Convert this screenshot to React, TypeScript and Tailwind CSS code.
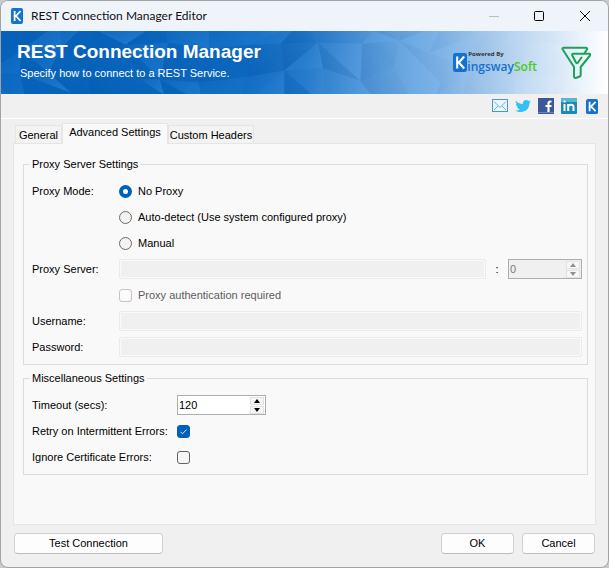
import { useState, type ReactNode } from "react";

const COLS = 17;
const ROWS = 3;
const CELL_W = 38;
const CELL_H = 26;

function jitter(n: number) {
  const v = Math.sin(n * 127.1 + 11.7) * 43758.5453;
  return v - Math.floor(v);
}

function vertex(c: number, r: number) {
  const n = r * 31 + c;
  return [(c - 0.5) * CELL_W + jitter(n) * 26 - 13, (r - 0.3) * CELL_H + jitter(n + 99) * 18 - 9];
}

function Facets() {
  const shapes: ReactNode[] = [];
  for (let r = 0; r < ROWS; r++) {
    for (let c = 0; c < COLS; c++) {
      const a = vertex(c, r);
      const b = vertex(c + 1, r);
      const d = vertex(c, r + 1);
      const e = vertex(c + 1, r + 1);
      const flip = jitter(r * 53 + c * 7) > 0.5;
      const tris = flip ? [[a, b, d], [b, e, d]] : [[a, b, e], [a, e, d]];
      tris.forEach((t, i) => {
        const s = jitter(r * 211 + c * 17 + i * 5);
        shapes.push(
          <polygon
            key={`${r}-${c}-${i}`}
            points={t.map((p) => p.join(",")).join(" ")}
            fill={s > 0.5 ? "url(#facetLight)" : "url(#facetDark)"}
            opacity={0.3 + Math.abs(s - 0.5) * 0.8}
          />,
        );
      });
    }
  }
  return (
    <svg className="absolute inset-0 h-full w-full" viewBox="0 0 607 63" preserveAspectRatio="none" aria-hidden="true">
      <defs>
        <linearGradient id="facetBase">
          <stop offset="0" stopColor="#0563bc" />
          <stop offset="0.4" stopColor="#0c69c0" />
          <stop offset="0.55" stopColor="#2a7dcc" />
          <stop offset="0.68" stopColor="#5098dc" />
          <stop offset="0.78" stopColor="#84b5e5" />
          <stop offset="0.9" stopColor="#c2daf2" />
          <stop offset="1" stopColor="#ffffff" />
        </linearGradient>
        <linearGradient id="facetLight" x1="0" y1="0" x2="1" y2="1">
          <stop offset="0" stopColor="#4f9ce6" stopOpacity="0.05" />
          <stop offset="1" stopColor="#4f9ce6" stopOpacity="0.6" />
        </linearGradient>
        <linearGradient id="facetDark" x1="1" y1="0" x2="0" y2="1">
          <stop offset="0" stopColor="#004c9c" stopOpacity="0.05" />
          <stop offset="1" stopColor="#004c9c" stopOpacity="0.45" />
        </linearGradient>
        <linearGradient id="facetFade">
          <stop offset="0.5" stopColor="#8fbdea" stopOpacity="0" />
          <stop offset="0.72" stopColor="#8fbdea" stopOpacity="0.6" />
          <stop offset="0.85" stopColor="#c3dbf3" stopOpacity="0.8" />
          <stop offset="1" stopColor="#fff" />
        </linearGradient>
      </defs>
      <rect width="607" height="63" fill="url(#facetBase)" />
      {shapes}
      <rect width="607" height="63" fill="url(#facetFade)" />
    </svg>
  );
}

function KIcon({ className }: { className: string }) {
  return (
    <svg className={className} viewBox="0 0 12 16" preserveAspectRatio="none" aria-hidden="true">
      <rect width="12" height="16" rx="2" fill="#1571cf" />
      <path d="M3.6 3v10M9.6 3 5 8l4.6 5" fill="none" stroke="#fff" strokeWidth="1.8" />
    </svg>
  );
}

function Spinner({ id, value, disabled, label }: { id: string; value: string; disabled?: boolean; label?: string }) {
  const [current, setCurrent] = useState(value);
  const step = (d: number) => setCurrent(String(Math.max(0, Number(current) + d)));
  const arrow = disabled ? "fill-[#8f8f8f]" : "fill-black";
  const button = "flex h-2 w-[14px] items-center justify-center border border-[#e2e2e2] bg-[#f7f7f7]";
  return (
    <div className={`flex h-5 items-center border border-[#abadb3] pr-px ${disabled ? "w-[74px] bg-[#f0f0f0]" : "w-[89px] bg-white"}`}>
      <input
        id={id}
        aria-label={label}
        disabled={disabled}
        value={current}
        onChange={(e) => setCurrent(e.target.value)}
        className="h-4 min-w-0 flex-1 bg-transparent pl-px text-[11px] leading-4 text-black outline-none disabled:text-[#7b7b7b]"
      />
      <div className="flex flex-col gap-px">
        <button type="button" aria-label="Increase" disabled={disabled} onClick={() => step(1)} className={button}>
          <svg width="6" height="4" viewBox="0 0 6 4" className={arrow}><path d="M3 0 6 4H0z" /></svg>
        </button>
        <button type="button" aria-label="Decrease" disabled={disabled} onClick={() => step(-1)} className={button}>
          <svg width="6" height="4" viewBox="0 0 6 4" className={arrow}><path d="M0 0h6L3 4z" /></svg>
        </button>
      </div>
    </div>
  );
}

function CheckBox({ id, defaultChecked, disabled }: { id: string; defaultChecked?: boolean; disabled?: boolean }) {
  return (
    <span className="grid size-[13px] shrink-0">
      <input
        id={id}
        type="checkbox"
        defaultChecked={defaultChecked}
        disabled={disabled}
        className="peer col-start-1 row-start-1 size-[13px] appearance-none rounded-[3px] border border-[#626262] bg-[#f5f5f5] checked:border-[#005fb8] checked:bg-[#005fb8] disabled:border-[#c4c4c4] disabled:bg-[#fbfbfb]"
      />
      <svg viewBox="0 0 13 13" className="pointer-events-none col-start-1 row-start-1 hidden size-[13px] peer-checked:block" aria-hidden="true">
        <path d="m3.5 6.8 2 2 4-4.2" fill="none" stroke="#d8e8f6" strokeWidth="1" />
      </svg>
    </span>
  );
}

function RadioRow({ id, label, defaultChecked }: { id: string; label: string; defaultChecked?: boolean }) {
  return (
    <div className="flex h-[26px] items-center gap-[6px]">
      <input
        id={id}
        type="radio"
        name="proxyMode"
        defaultChecked={defaultChecked}
        className="size-[13px] appearance-none rounded-full border border-[#6a6a6a] bg-[#f3f3f3] checked:border-4 checked:border-[#005fb8] checked:bg-white"
      />
      <label htmlFor={id}>{label}</label>
    </div>
  );
}

const row = "flex h-[26px] items-center";
const field = "h-5 min-w-0 flex-1 rounded-[2px] border border-[#ebebeb] bg-[#f0f0f0] px-1 shadow-[inset_0_0_0_1px_#fafafa] outline-none";
const group = "border border-[#dcdcdc] pt-1 pb-1 pl-2";
const legend = "-ml-[2px] px-[2px] leading-5";
const pushButton = "h-[21px] rounded-[4px] border border-[#d0d0d0] border-b-[#bcbcbc] bg-[#fdfdfd] leading-[19px]";
const tab = "h-[18px] border border-b-0 border-[#e5e5e5] bg-[#f3f3f3] whitespace-nowrap";

export default function App() {
  return (
    <div className="flex min-h-screen flex-col bg-[#c9c9cc] font-['Liberation_Sans',Arial,sans-serif] text-[11px] leading-4 text-black">
      <div className="flex flex-1 flex-col overflow-hidden rounded-lg border border-[#a3a3a3] bg-[#f0f0f0]">
        <header className="flex h-[30px] shrink-0 items-center bg-[#eff4fb] pl-[10px]">
          <KIcon className="h-4 w-3" />
          <h1 className="ml-2 flex-1 font-[Lato,sans-serif] text-[12px] text-[#111]">REST Connection Manager Editor</h1>
          <button type="button" aria-label="Minimize" className="flex w-[45px] justify-center">
            <svg width="10" height="10" viewBox="0 0 10 10"><path d="M0 5.5h10" stroke="#b9bdc3" /></svg>
          </button>
          <button type="button" aria-label="Maximize" className="flex w-[45px] justify-center">
            <svg width="10" height="10" viewBox="0 0 10 10"><rect x="0.5" y="0.5" width="9" height="9" rx="1" fill="none" stroke="#000" /></svg>
          </button>
          <button type="button" aria-label="Close" className="flex w-[47px] justify-center">
            <svg width="10" height="10" viewBox="0 0 10 10"><path d="m0 0 10 10M10 0 0 10" stroke="#000" /></svg>
          </button>
        </header>

        <section className="relative h-[63px] shrink-0">
          <Facets />
          <div className="relative flex h-full items-center pr-[17px] pl-4">
            <div className="flex-1 pb-[3px] text-white">
              <h2 className="text-[19px] leading-6 font-bold">REST Connection Manager</h2>
              <p className="pl-[3px] leading-[18px]">Specify how to connect to a REST Service.</p>
            </div>
            <div className="flex items-center font-['Open_Sans','Noto_Sans',sans-serif]">
              <KIcon className="h-[19px] w-[14px]" />
              <div className="flex flex-col pb-px">
                <span className="pl-px text-[6px] leading-[9px] font-bold text-[#333]">Powered By</span>
                <span className="text-[12px] leading-4 font-semibold text-[#1571cf]">ingsway<span className="text-[#4cc81e]">Soft</span></span>
              </div>
            </div>
            <svg className="ml-6 h-[33px] w-[30px]" viewBox="0 0 30 33" fill="none" stroke="#1fa05a" strokeWidth="2" strokeLinejoin="round" strokeLinecap="round" aria-hidden="true">
              <path d="M23.500 7 26 3.500Q26.500 1.700 25 1.700H2.500Q1 2 1.700 3.500L13 21V30.500Q13.500 32.500 15.500 31.700L18.700 30.500Q19.700 30 19.700 29V21L29 9.500Q29.500 7.800 28.300 7.700H12Q10.700 8 11.300 9.500L15 16.500Q16 18 17 16.500L20.500 11.500" />
            </svg>
          </div>
        </section>

        <nav aria-label="Links" className="flex h-[25px] shrink-0 items-center justify-end gap-[7px] border-b border-white pr-[10px]">
          <a href="#email" aria-label="Email">
            <svg width="16" height="16" viewBox="0 0 16 16">
              <rect x="0.5" y="1.500" width="15" height="12" fill="#e9f5fd" stroke="#4f97cb" />
              <path d="m2 3.500 6 6 6-6M2 12l4-4M14 12l-4-4" fill="none" stroke="#6fb0dc" />
            </svg>
          </a>
          <a href="#twitter" aria-label="Twitter">
            <svg width="16" height="16" viewBox="0 0 16 16">
              <path d="M.8 2.800c2 2.200 4 3 7 3.200C7.600 3.700 9 2 11 2c1 0 1.700.3 2.300.9l2-.7-.9 1.700 1.500-.3-1.500 1.700C14.300 10.800 10.500 14 6 14c-2.200 0-4-.5-5.500-1.500 2 0 3.200-.4 4.300-1.300C3.300 11 2.500 10.300 2 9.100h1.300C1.800 8.500 1 7.500 1 6l1.200.3C.8 5.300.3 4 .8 2.800z" fill="#33c0f3" />
            </svg>
          </a>
          <a href="#facebook" aria-label="Facebook">
            <svg width="16" height="16" viewBox="0 0 16 16">
              <rect width="16" height="16" fill="#3b5998" />
              <path d="M0 14h16v1H0z" fill="#6d84b4" />
              <path d="M13.500 3.500h-1q-2 0-2 2V14M7.500 8h6" fill="none" stroke="#fff" strokeWidth="2.200" />
            </svg>
          </a>
          <a href="#linkedin" aria-label="LinkedIn">
            <svg width="16" height="16" viewBox="0 0 16 16">
              <rect width="16" height="16" rx="1" fill="#1b8ab8" />
              <path d="M0 0h16v4H0z" fill="#5db4d3" />
              <path d="M3.500 2.500v2M3.500 6v7M7.200 13V6M7.200 9q0-2.200 2.700-2.200T12.500 9v4" fill="none" stroke="#fff" strokeWidth="2" />
            </svg>
          </a>
          <a href="#kingswaysoft" aria-label="KingswaySoft" className="ml-[2px]">
            <KIcon className="h-[15px] w-3" />
          </a>
        </nav>

        <main className="flex flex-1 flex-col px-3 pt-1">
          <div role="tablist" className="flex items-end pl-[2px]">
            <button type="button" role="tab" aria-selected="false" className={`${tab} w-[47px]`}>General</button>
            <button type="button" role="tab" aria-selected="true" className="z-10 -mb-px h-[21px] w-[106px] border border-b-0 border-[#e5e5e5] bg-[#f9f9f9] pb-1 whitespace-nowrap">Advanced Settings</button>
            <button type="button" role="tab" aria-selected="false" className={`${tab} w-[86px]`}>Custom Headers</button>
          </div>
          <div role="tabpanel" className="flex-1 border border-[#e5e5e5] bg-[#f9f9f9] pt-[10px] pr-[7px] pb-12 pl-[9px]">
            <fieldset className={`${group} pr-[5px]`}>
              <legend className={legend}>Proxy Server Settings</legend>
              <div className="flex">
                <span className="w-[87px] leading-[26px]">Proxy Mode:</span>
                <div>
                  <RadioRow id="none" label="No Proxy" defaultChecked />
                  <RadioRow id="auto" label="Auto-detect (Use system configured proxy)" />
                  <RadioRow id="manual" label="Manual" />
                </div>
              </div>
              <div className={row}>
                <label htmlFor="server" className="w-[87px]">Proxy Server:</label>
                <input id="server" disabled className={field} />
                <span className="w-[22px] text-center">:</span>
                <Spinner id="port" label="Proxy port" value="0" disabled />
              </div>
              <div className={`${row} gap-[6px] pl-[87px]`}>
                <CheckBox id="auth" disabled />
                <label htmlFor="auth" className="text-[#5c5c5c]">Proxy authentication required</label>
              </div>
              <div className={row}>
                <label htmlFor="user" className="w-[87px]">Username:</label>
                <input id="user" disabled className={field} />
              </div>
              <div className={row}>
                <label htmlFor="pass" className="w-[87px]">Password:</label>
                <input id="pass" type="password" disabled className={field} />
              </div>
            </fieldset>
            <fieldset className={`${group} mt-[3px]`}>
              <legend className={legend}>Miscellaneous Settings</legend>
              <div className={row}>
                <label htmlFor="timeout" className="w-[145px]">Timeout (secs):</label>
                <Spinner id="timeout" value="120" />
              </div>
              <div className={row}>
                <label htmlFor="retry" className="w-[145px]">Retry on Intermittent Errors:</label>
                <CheckBox id="retry" defaultChecked />
              </div>
              <div className={row}>
                <label htmlFor="ignore" className="w-[145px]">Ignore Certificate Errors:</label>
                <CheckBox id="ignore" />
              </div>
            </fieldset>
          </div>
        </main>

        <footer className="flex items-center gap-2 px-[13px] pt-2 pb-[13px]">
          <button type="button" className={`${pushButton} w-[149px]`}>Test Connection</button>
          <button type="button" className={`${pushButton} ml-auto w-[73px]`}>OK</button>
          <button type="button" className={`${pushButton} w-[73px]`}>Cancel</button>
        </footer>
      </div>
    </div>
  );
}
